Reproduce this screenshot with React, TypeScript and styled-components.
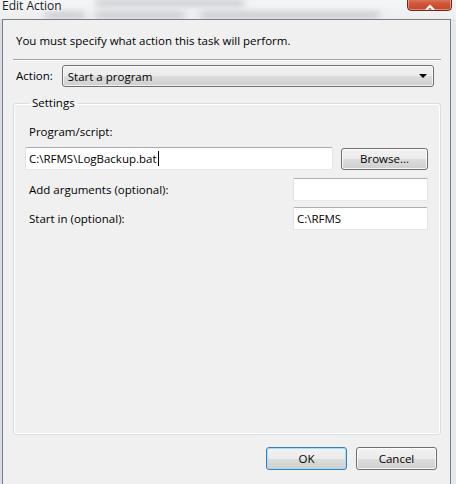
import React from "react";
import styled, { createGlobalStyle } from "styled-components";

const GlobalStyle = createGlobalStyle`
  html, body {
    margin: 0;
    padding: 0;
    background: #dfe4ea;
  }
  body {
    font-family: "Open Sans", "Noto Sans", sans-serif;
    font-size: 11.5px;
    color: #000;
  }
`;

const Frame = styled.div`
  width: 456px;
  height: 484px;
  overflow: hidden;
  display: flex;
  flex-direction: column;
  background: linear-gradient(90deg, #d9dee4 0%, #eef1f4 40%, #e6eaee 100%);
`;

const TitleBar = styled.div`
  position: relative;
  height: 19px;
  flex: none;
  display: flex;
  align-items: flex-start;
  overflow: hidden;
  background: linear-gradient(180deg, #f4f5f6 0%, #eceef0 100%);
`;

const Title = styled.span`
  position: relative;
  margin: -1px 0 0 2px;
  font-size: 12px;
  line-height: 14px;
  color: #1a1a1a;
  text-shadow: 0 0 6px #fff, 0 0 4px #fff;
  z-index: 1;
`;

// blurred window content showing through the glass title bar
const Smudge = styled.span<{ $left: number; $top: number; $width: number }>`
  position: absolute;
  left: ${(p) => p.$left}px;
  top: ${(p) => p.$top}px;
  width: ${(p) => p.$width}px;
  height: 6px;
  background: #a9acb1;
  border-radius: 3px;
  filter: blur(3px);
  opacity: 0.6;
`;

const CloseButton = styled.div`
  position: absolute;
  right: 4px;
  top: -6px;
  width: 43px;
  height: 15px;
  border: 1px solid #6b2a1a;
  border-radius: 0 0 4px 4px;
  background: linear-gradient(180deg, #e8a088 0%, #d0583a 55%, #c2452a 100%);
  box-shadow: inset 0 0 0 1px rgba(255, 210, 190, 0.5);
  display: flex;
  justify-content: center;
  align-items: flex-end;
  z-index: 2;
`;

const Client = styled.div`
  flex: 1;
  margin: 0 5px 0 2px;
  border: 1px solid #7a7f86;
  border-bottom: none;
  background: #f0f0f0;
  padding: 13px 9px 0 10px;
  display: flex;
  flex-direction: column;
`;

const Heading = styled.div`
  line-height: 16px;
  padding-left: 3px;
`;

const Separator = styled.div`
  margin-top: 10px;
  height: 0;
  border-top: 1px solid #a0a0a0;
  border-bottom: 1px solid #fff;
`;

const ActionRow = styled.div`
  display: flex;
  align-items: center;
  margin-top: 4px;
  padding-left: 3px;
`;

const Label = styled.span`
  white-space: nowrap;
  line-height: 16px;
`;

const ComboBox = styled.div`
  margin-left: 9px;
  flex: 1;
  margin-right: 7px;
  height: 20px;
  border: 1px solid #707070;
  border-radius: 3px;
  background: linear-gradient(180deg, #f2f2f2 0%, #ebebeb 50%, #dddddd 51%, #cfcfcf 100%);
  box-shadow: inset 0 0 0 1px rgba(255, 255, 255, 0.7);
  display: flex;
  align-items: center;
  justify-content: space-between;
  padding: 0 6px 0 5px;
`;

const Arrow = styled.span`
  width: 0;
  height: 0;
  border-left: 4px solid transparent;
  border-right: 4px solid transparent;
  border-top: 4px solid #000;
`;

const Group = styled.fieldset`
  margin: 8px 0 0 0;
  padding: 13px 12px 0 11px;
  height: 340px;
  border: 1px solid #d5dfe5;
  border-radius: 3px;
  box-shadow: inset 0 0 0 1px #fff;
  display: flex;
  flex-direction: column;
  box-sizing: border-box;
`;

const Legend = styled.legend`
  padding: 0 3px;
  margin-left: 4px;
  line-height: 16px;
`;

const FieldLabel = styled.div`
  line-height: 16px;
  padding-left: 4px;
`;

const ProgramRow = styled.div`
  display: flex;
  align-items: center;
  margin-top: 7px;
  gap: 8px;
`;

const TextBox = styled.div<{ $width?: number }>`
  box-sizing: border-box;
  height: 23px;
  width: ${(p) => (p.$width ? `${p.$width}px` : "auto")};
  flex: ${(p) => (p.$width ? "none" : "1")};
  background: #fff;
  border: 1px solid #e2e3ea;
  border-top-color: #abadb3;
  border-bottom-color: #e3e9ef;
  border-radius: 2px;
  display: flex;
  align-items: center;
  padding-left: 3px;
  white-space: nowrap;
`;

const Caret = styled.span`
  display: inline-block;
  width: 1px;
  height: 15px;
  background: #000;
  margin-left: 1px;
`;

const PushButton = styled.div<{ $default?: boolean }>`
  box-sizing: border-box;
  width: 81px;
  height: 23px;
  border: 1px solid ${(p) => (p.$default ? "#3c7fb1" : "#707070")};
  border-radius: 3px;
  background: linear-gradient(180deg, #f2f2f2 0%, #ebebeb 50%, #dddddd 51%, #cfcfcf 100%);
  box-shadow: inset 0 0 0 1px ${(p) => (p.$default ? "rgba(160, 220, 245, 0.9)" : "rgba(255, 255, 255, 0.8)")};
  display: flex;
  align-items: center;
  justify-content: center;
  line-height: 16px;
`;

const BrowseButton = styled(PushButton)`
  width: 87px;
  height: 22px;
  margin-top: 1px;
`;

const OptionRow = styled.div<{ $gap: number }>`
  display: flex;
  align-items: center;
  justify-content: space-between;
  margin-top: ${(p) => p.$gap}px;
`;

const Footer = styled.div`
  display: flex;
  justify-content: flex-end;
  gap: 9px;
  margin-top: 12px;
  padding-right: 4px;
`;

export default function App() {
  return (
    <>
      <GlobalStyle />
      <Frame>
        <TitleBar>
          <Smudge $left={95} $top={0} $width={150} />
          <Smudge $left={45} $top={12} $width={40} />
          <Smudge $left={95} $top={12} $width={90} />
          <Smudge $left={200} $top={12} $width={180} />
          <Title>Edit Action</Title>
          <CloseButton>
            <svg width="12" height="6" viewBox="0 0 12 6">
              <path d="M2 6 L6 2 L10 6" stroke="#fff" strokeWidth="2.2" fill="none" />
            </svg>
          </CloseButton>
        </TitleBar>
        <Client>
          <Heading>You must specify what action this task will perform.</Heading>
          <Separator />
          <ActionRow>
            <Label>Action:</Label>
            <ComboBox>
              <span>Start a program</span>
              <Arrow />
            </ComboBox>
          </ActionRow>
          <Group>
            <Legend>Settings</Legend>
            <FieldLabel>Program/script:</FieldLabel>
            <ProgramRow>
              <TextBox>
                C:\RFMS\LogBackup.bat
                <Caret />
              </TextBox>
              <BrowseButton>Browse...</BrowseButton>
            </ProgramRow>
            <OptionRow $gap={8}>
              <FieldLabel>Add arguments (optional):</FieldLabel>
              <TextBox $width={135} />
            </OptionRow>
            <OptionRow $gap={6}>
              <FieldLabel>Start in (optional):</FieldLabel>
              <TextBox $width={135}>C:\RFMS</TextBox>
            </OptionRow>
          </Group>
          <Footer>
            <PushButton $default>OK</PushButton>
            <PushButton>Cancel</PushButton>
          </Footer>
        </Client>
      </Frame>
    </>
  );
}
